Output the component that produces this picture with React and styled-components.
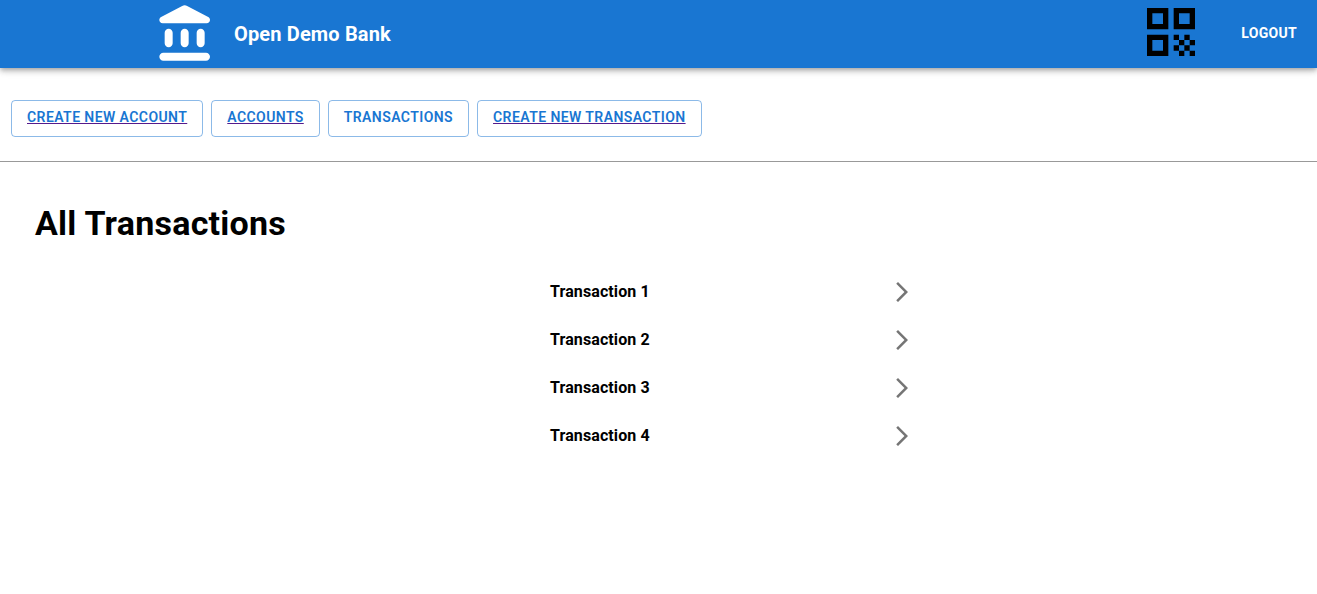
import React from "react";
import styled, { createGlobalStyle } from "styled-components";

const GlobalStyle = createGlobalStyle`
  body {
    margin: 0;
    background: #fff;
    font-family: Roboto, "Liberation Sans", sans-serif;
  }
`;

const AppBar = styled.header`
  display: flex;
  align-items: center;
  height: 68px;
  padding-left: 154px;
  padding-right: 4px;
  background: #1976d2;
  color: #fff;
  box-shadow: 0px 2px 4px -1px rgba(0, 0, 0, 0.2), 0px 4px 5px 0px rgba(0, 0, 0, 0.14), 0px 1px 10px 0px rgba(0, 0, 0, 0.12);
`;

const BrandIcon = styled.svg`
  width: 64px;
  height: 64px;
  fill: #fff;
  flex-shrink: 0;
`;

const BrandName = styled.div`
  margin-left: 16px;
  flex-grow: 1;
  font-size: 20px;
  font-weight: 700;
  letter-spacing: 0.15px;
  line-height: 32px;
`;

const QrIcon = styled.svg`
  width: 64px;
  height: 64px;
  fill: #000;
  align-self: flex-start;
  flex-shrink: 0;
`;

const LogoutButton = styled.button`
  margin: 0 0 2px 22px;
  padding: 6px 16px;
  border: 0;
  background: none;
  color: #fff;
  font-family: inherit;
  font-size: 14px;
  font-weight: 700;
  letter-spacing: 0.3px;
  line-height: 24px;
  text-transform: uppercase;
`;

const NavRow = styled.nav`
  display: flex;
  gap: 8px;
  padding: 32px 11px 24px;
  border-bottom: 1px solid #999;
`;

const NavButton = styled.a`
  display: block;
  padding: 4.25px 15px 6.25px;
  border: 1px solid rgba(25, 118, 210, 0.5);
  border-radius: 4px;
  color: #1976d2;
  font-size: 14px;
  font-weight: 600;
  letter-spacing: 0.42px;
  line-height: 24.5px;
  text-transform: uppercase;
  text-decoration: ${(props) => (props.$plain ? "none" : "underline")};
  text-decoration-color: #551a8b;
`;

const Content = styled.main`
  padding: 39px 35px 0;
`;

const Heading = styled.h1`
  margin: 0 0 23px;
  color: #000;
  font-size: 34px;
  font-weight: 700;
  letter-spacing: 0.25px;
  line-height: 44px;
`;

const TransactionList = styled.ul`
  width: 364px;
  margin: 0 0 0 515px;
  padding: 0;
  list-style: none;
`;

const TransactionRow = styled.li`
  display: flex;
  align-items: center;
  justify-content: space-between;
  height: 48px;
  color: #000;
  font-size: 16px;
  font-weight: 700;
  letter-spacing: 0.1px;
`;

const RowLabel = styled.span`
  margin-bottom: 2px;
`;

const Chevron = styled.svg`
  width: 24px;
  height: 24px;
  fill: #757575;
`;

const navItems = [
  { label: "Create new account" },
  { label: "Accounts" },
  { label: "Transactions", plain: true },
  { label: "Create new transaction" },
];

const transactions = ["Transaction 1", "Transaction 2", "Transaction 3", "Transaction 4"];

export default function App() {
  return (
    <>
      <GlobalStyle />
      <AppBar>
        <BrandIcon viewBox="0 0 24 24">
          <path d="M4 11.5v4c0 .83.67 1.5 1.5 1.5S7 16.33 7 15.5v-4c0-.83-.67-1.5-1.5-1.5S4 10.67 4 11.5zm6 0v4c0 .83.67 1.5 1.5 1.5s1.5-.67 1.5-1.5v-4c0-.83-.67-1.5-1.5-1.5s-1.5.67-1.5 1.5zM3.5 22h16c.83 0 1.5-.67 1.5-1.5s-.67-1.5-1.5-1.5h-16c-.83 0-1.5.67-1.5 1.5S2.67 22 3.5 22zM16 11.5v4c0 .83.67 1.5 1.5 1.5s1.5-.67 1.5-1.5v-4c0-.83-.67-1.5-1.5-1.5s-1.5.67-1.5 1.5zM10.57 1.49l-7.9 4.16c-.41.21-.67.64-.67 1.1C2 7.44 2.56 8 3.25 8h16.51C20.44 8 21 7.44 21 6.75c0-.46-.26-.89-.67-1.1l-7.9-4.16c-.58-.31-1.28-.31-1.86 0z" />
        </BrandIcon>
        <BrandName>Open Demo Bank</BrandName>
        <QrIcon viewBox="0 0 24 24">
          <path d="M3 11h8V3H3v8zm2-6h4v4H5V5zM3 21h8v-8H3v8zm2-6h4v4H5v-4zm8-12v8h8V3h-8zm6 6h-4V5h4v4zm0 10h2v2h-2zm-6-6h2v2h-2zm2 2h2v2h-2zm-2 2h2v2h-2zm2 2h2v2h-2zm2-2h2v2h-2zm0-4h2v2h-2zm2 2h2v2h-2z" />
        </QrIcon>
        <LogoutButton>Logout</LogoutButton>
      </AppBar>
      <NavRow>
        {navItems.map((item) => (
          <NavButton key={item.label} href="#" $plain={item.plain}>
            {item.label}
          </NavButton>
        ))}
      </NavRow>
      <Content>
        <Heading>All Transactions</Heading>
        <TransactionList>
          {transactions.map((name) => (
            <TransactionRow key={name}>
              <RowLabel>{name}</RowLabel>
              <Chevron viewBox="0 0 24 24">
                <path d="M6.23 20.23 8 22l10-10L8 2 6.23 3.77 14.46 12z" />
              </Chevron>
            </TransactionRow>
          ))}
        </TransactionList>
      </Content>
    </>
  );
}
